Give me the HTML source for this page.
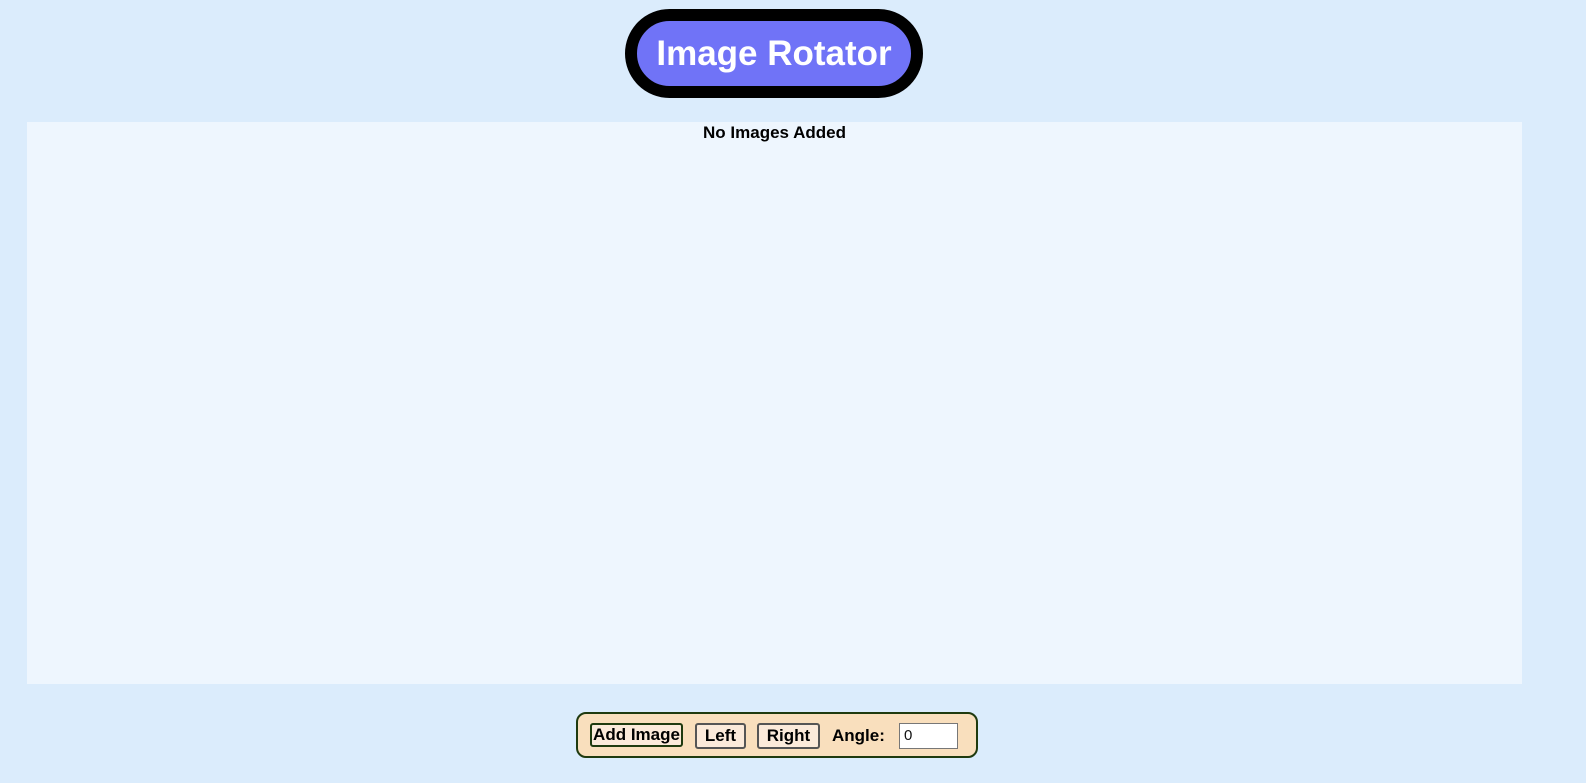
<!DOCTYPE html>
<html><head><meta charset="utf-8"><style>
html,body{margin:0;padding:0}
body{width:1586px;height:783px;background:#dbecfc;font-family:"Liberation Sans",Arial,sans-serif;position:relative;overflow:hidden}
.title{position:absolute;left:625px;top:9px;width:274px;height:65px;border:12px solid #000;border-radius:50px;background:#7073f7;color:#fff;font-weight:bold;font-size:35px;line-height:66px;text-align:center}
.panel{position:absolute;left:27px;top:122px;width:1495px;height:562px;background:#eef6fe}
.panel p{margin:0;text-align:center;font-weight:bold;font-size:17px;line-height:18px;padding-top:2px;color:#000}
.bar{position:absolute;left:576px;top:712px;width:398px;height:42px;background:#f9dfbd;border:2px solid #1f3a0f;border-radius:10px}
.btn{position:absolute;box-sizing:border-box;border-radius:3px;background:#fbeada;font-weight:bold;font-size:17px;text-align:center;color:#000;white-space:nowrap}
.lbl{position:absolute;top:12px;left:254px;font-weight:bold;font-size:17px}
.inp{position:absolute;left:321px;top:9px;width:59px;height:26px;box-sizing:border-box;background:#fff;border:1px solid #777;font-size:15px;line-height:23px;padding-left:4px;color:#111}
</style></head><body>
<div class="title">Image Rotator</div>
<div class="panel"><p>No Images Added</p></div>
<div class="bar">
<div class="btn" style="left:12px;width:93px;border:2px solid #1f3a0f;height:24px;top:9px;line-height:20px">Add Image</div>
<div class="btn" style="left:117px;width:51px;border:2px solid #555;height:26px;top:9px;line-height:22px">Left</div>
<div class="btn" style="left:179px;width:63px;border:2px solid #555;height:26px;top:9px;line-height:22px">Right</div>
<div class="lbl">Angle:</div>
<div class="inp">0</div>
</div>
</body></html>
